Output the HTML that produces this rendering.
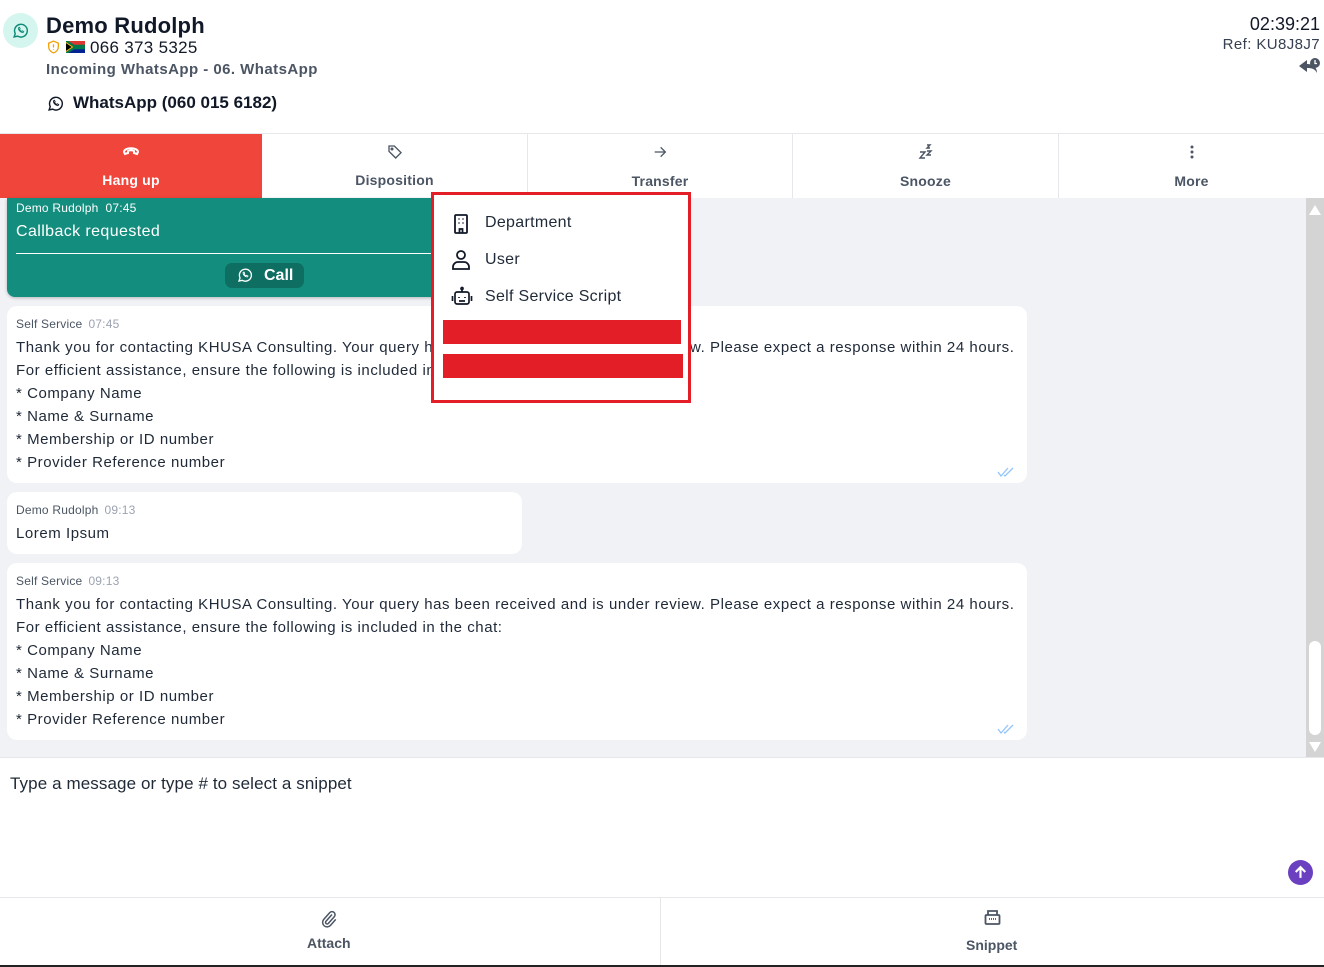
<!DOCTYPE html>
<html><head><meta charset="utf-8"><style>
*{box-sizing:border-box;margin:0;padding:0}
body{width:1324px;height:967px;position:relative;overflow:hidden;background:#fff;font-family:"Liberation Sans",sans-serif;color:#111827}
.a{position:absolute}
.tab{position:absolute;top:134px;height:64px;border-right:1px solid #e5e7eb;text-align:center;color:#4b5563;font-size:14px;font-weight:bold;letter-spacing:0.2px}
.tab svg{position:absolute;left:50%;top:10px;transform:translateX(-50%)}
.tab span{position:absolute;left:0;right:0;top:38px}
.bub{position:absolute;left:7px;background:#fff;border-radius:10px;padding:11px 9px;font-size:15px;line-height:23px;color:#1f2937;letter-spacing:0.55px}
.meta{font-size:12px;color:#4b5563;line-height:14px;margin-bottom:5px;letter-spacing:0.2px}
.meta i{font-style:normal;color:#9ca3af;margin-left:6px}
.ticks{position:absolute;right:10px;bottom:6px}
</style></head><body>
<div class="a" style="left:3px;top:13px;width:35px;height:35px;border-radius:50%;background:#d5f5ef"></div>
<svg class="a" style="left:12px;top:22px" width="17" height="17" viewBox="0 0 24 24" fill="none" stroke="#0f8a78" stroke-width="2"><path d="M3 21l1.6-4.6A9 9 0 1 1 8 20z"/><path d="M9 8.5c0 3 3 6.5 6.5 6.5l1-1.5-2-1-1 .8c-1-.5-2.3-1.8-2.8-2.8l.8-1-1-2z" stroke-width="1.3"/></svg>
<div class="a" style="left:46px;top:13px;font-size:22px;font-weight:bold;color:#111827;letter-spacing:0.2px">Demo Rudolph</div>
<svg class="a" style="left:47px;top:40px" width="13" height="14" viewBox="0 0 24 26" fill="none" stroke="#f2a20c" stroke-width="2.4"><path d="M12 2l9 4v6c0 6-4 10-9 12C7 22 3 18 3 12V6z"/><path d="M12 8v6M12 17v1"/></svg>
<svg class="a" style="left:66px;top:41px" width="19" height="12" viewBox="0 0 19 12"><rect width="19" height="12" fill="#de3831"/><rect y="6" width="19" height="6" fill="#002395"/><path d="M0 0l9 6-9 6z" fill="#000"/><path d="M0 0l8 5h11v2H8l-8 5" fill="none" stroke="#007a4d" stroke-width="2.5"/><path d="M0 1.5L6.5 6 0 10.5" fill="none" stroke="#ffb612" stroke-width="1"/></svg>
<div class="a" style="left:90px;top:38px;font-size:17px;color:#111827;letter-spacing:0.3px">066 373 5325</div>
<div class="a" style="left:46px;top:61px;font-size:15px;font-weight:bold;color:#4b5563;letter-spacing:0.45px">Incoming WhatsApp - 06. WhatsApp</div>
<svg class="a" style="left:47px;top:95px" width="17" height="17" viewBox="0 0 24 24" fill="none" stroke="#111827" stroke-width="2"><path d="M3 21l1.6-4.6A9 9 0 1 1 8 20z"/><path d="M9 8.5c0 3 3 6.5 6.5 6.5l1-1.5-2-1-1 .8c-1-.5-2.3-1.8-2.8-2.8l.8-1-1-2z" stroke-width="1.3"/></svg>
<div class="a" style="left:73px;top:93px;font-size:17px;font-weight:bold;color:#111827">WhatsApp (060 015 6182)</div>
<div class="a" style="right:4px;top:14px;font-size:18px;color:#111827">02:39:21</div>
<div class="a" style="right:4px;top:36px;font-size:15px;color:#374151;letter-spacing:0.4px">Ref: KU8J8J7</div>
<svg class="a" style="left:1298px;top:57px" width="23" height="20" viewBox="0 0 23 20"><path d="M9 3L1 9l8 6v-4c5 0 8 1 10 5 0-6-4-9-10-9z" fill="#4b5563"/><circle cx="17" cy="6" r="5" fill="#4b5563"/><path d="M17 3v3.5h2" stroke="#fff" stroke-width="1.3" fill="none"/></svg>
<div class="a" style="left:0;top:133px;width:1324px;height:1px;background:#e5e7eb"></div>
<div class="tab" style="left:0;width:262px;background:#f0453a;color:#fff;border:none">
<svg width="20" height="12" viewBox="0 0 20 12" fill="none" stroke="#fff" stroke-width="2"><path d="M3 8c0-5 14-5 14 0l-1 2-3-1v-2c-2-1-4-1-6 0v2l-3 1z"/></svg><span>Hang up</span></div>
<div class="tab" style="left:262px;width:266px"><svg width="16" height="16" viewBox="0 0 24 24" fill="none" stroke="#4b5563" stroke-width="2"><path d="M3 3h8l10 10-8 8L3 11z"/><circle cx="7.5" cy="7.5" r="1.3"/></svg><span>Disposition</span></div>
<div class="tab" style="left:528px;width:265px"><svg width="16" height="16" viewBox="0 0 24 24" fill="none" stroke="#4b5563" stroke-width="2"><path d="M4 12h16M13 5l7 7-7 7"/></svg><span style="top:39px">Transfer</span></div>
<div class="tab" style="left:793px;width:266px"><svg width="16" height="16" viewBox="0 0 16 16" fill="none" stroke="#4b5563" stroke-width="1.4"><path d="M2 8h5l-5 6h5M9 7h4l-4 4h4M9 1h3L9 4h3"/></svg><span style="top:39px">Snooze</span></div>
<div class="tab" style="left:1059px;width:265px;border:none"><svg width="6" height="16" viewBox="0 0 6 16" fill="#4b5563"><circle cx="3" cy="3" r="1.5"/><circle cx="3" cy="8" r="1.5"/><circle cx="3" cy="13" r="1.5"/></svg><span style="top:39px">More</span></div>
<div class="a" style="left:0;top:198px;width:1324px;height:559px;background:#f1f2f6"></div>
<div class="a" style="left:1306px;top:198px;width:18px;height:559px;background:#d4d4d4"></div>
<div class="a" style="left:1309px;top:641px;width:12px;height:94px;background:#fff;border-radius:6px"></div>
<svg class="a" style="left:1308px;top:204px" width="14" height="12"><path d="M7 1l6 10H1z" fill="#fff"/></svg>
<svg class="a" style="left:1308px;top:741px" width="14" height="12"><path d="M7 11l6-10H1z" fill="#fff"/></svg>
<div class="a" style="left:7px;top:198px;width:515px;height:99px;background:#138d7e;border-radius:0 0 8px 8px;box-shadow:0 1px 3px rgba(0,0,0,.25);color:#fff">
<div class="a" style="left:9px;top:3px;font-size:12px;letter-spacing:0.2px">Demo Rudolph&nbsp; 07:45</div>
<div class="a" style="left:9px;top:25px;font-size:16px;letter-spacing:0.4px">Callback requested</div>
<div class="a" style="left:9px;top:55px;width:497px;height:1px;background:#fff"></div>
<div class="a" style="left:218px;top:65px;width:79px;height:25px;border-radius:7px;background:#0e6e62"></div>
<svg class="a" style="left:230px;top:69px" width="16" height="16" viewBox="0 0 24 24" fill="none" stroke="#fff" stroke-width="2"><path d="M3 21l1.6-4.6A9 9 0 1 1 8 20z"/><path d="M9 8.5c0 3 3 6.5 6.5 6.5l1-1.5-2-1-1 .8c-1-.5-2.3-1.8-2.8-2.8l.8-1-1-2z" stroke-width="1.3"/></svg>
<div class="a" style="left:257px;top:69px;font-size:16px;font-weight:bold">Call</div>
</div>
<div class="bub" style="top:306px;width:1020px;height:177px"><div class="meta">Self Service<i>07:45</i></div>Thank you for contacting KHUSA Consulting. Your query has been received and is under review. Please expect a response within 24 hours.<br>For efficient assistance, ensure the following is included in the chat:<br>* Company Name<br>* Name &amp; Surname<br>* Membership or ID number<br>* Provider Reference number
<svg class="ticks" width="20" height="10" viewBox="0 0 20 10" fill="none" stroke="#93c5fd" stroke-width="1.3"><path d="M1 5l3 4 7-8M7 8l1 1 8-8"/></svg></div>
<div class="bub" style="top:492px;width:515px;height:62px"><div class="meta">Demo Rudolph<i>09:13</i></div>Lorem Ipsum</div>
<div class="bub" style="top:563px;width:1020px;height:177px"><div class="meta">Self Service<i>09:13</i></div>Thank you for contacting KHUSA Consulting. Your query has been received and is under review. Please expect a response within 24 hours.<br>For efficient assistance, ensure the following is included in the chat:<br>* Company Name<br>* Name &amp; Surname<br>* Membership or ID number<br>* Provider Reference number
<svg class="ticks" width="20" height="10" viewBox="0 0 20 10" fill="none" stroke="#93c5fd" stroke-width="1.3"><path d="M1 5l3 4 7-8M7 8l1 1 8-8"/></svg></div>
<div class="a" style="left:431px;top:192px;width:260px;height:211px;border:3px solid #e41e26;background:#fff">
<svg class="a" style="left:19px;top:19px" width="16" height="20" viewBox="0 0 16 20" fill="none" stroke="#111827" stroke-width="1.8"><rect x="2" y="1" width="12" height="18" rx="1"/><path d="M5.5 5h1M9.5 5h1M5.5 9h1M9.5 9h1M6.5 19v-4h3v4"/></svg>
<div class="a" style="left:51px;top:19px;font-size:16px;color:#1f2937;letter-spacing:0.3px">Department</div>
<svg class="a" style="left:18px;top:55px" width="18" height="20" viewBox="0 0 18 20" fill="none" stroke="#111827" stroke-width="1.8"><circle cx="9" cy="5" r="4"/><path d="M1 19v-2a5 5 0 0 1 5-5h6a5 5 0 0 1 5 5v2z"/></svg>
<div class="a" style="left:51px;top:56px;font-size:16px;color:#1f2937;letter-spacing:0.3px">User</div>
<svg class="a" style="left:17px;top:91px" width="22" height="20" viewBox="0 0 22 20" fill="none" stroke="#111827" stroke-width="1.7"><rect x="4" y="6" width="14" height="12" rx="2"/><path d="M11 6V3M1.5 10v5M20.5 10v5M8 11v1M14 11v1M8 15h6"/><circle cx="11" cy="2.5" r="1"/></svg>
<div class="a" style="left:51px;top:93px;font-size:16px;color:#1f2937;letter-spacing:0.3px">Self Service Script</div>
<div class="a" style="left:9px;top:125px;width:238px;height:24px;background:#e41e26"></div>
<div class="a" style="left:9px;top:159px;width:240px;height:24px;background:#e41e26"></div>
</div>
<div class="a" style="left:0;top:757px;width:1324px;height:1px;background:#e5e7eb"></div>
<div class="a" style="left:10px;top:774px;font-size:17px;color:#1f2937;letter-spacing:0.1px">Type a message or type # to select a snippet</div>
<div class="a" style="left:1288px;top:860px;width:25px;height:25px;border-radius:50%;background:#6a3fc0"></div>
<svg class="a" style="left:1292px;top:864px" width="17" height="17" viewBox="0 0 16 16" fill="none" stroke="#fff" stroke-width="2"><path d="M8 13V3M3.5 7.5L8 3l4.5 4.5"/></svg>
<div class="a" style="left:0;top:897px;width:1324px;height:1px;background:#e5e7eb"></div>
<div class="a" style="left:660px;top:898px;width:1px;height:67px;background:#e5e7eb"></div>
<svg class="a" style="left:320px;top:909px" width="18" height="20" viewBox="0 0 24 24" fill="none" stroke="#4b5563" stroke-width="2"><path d="M16 6l-8 9a2 2 0 0 0 3 3l8-9a4 4 0 0 0-6-5.5l-8 9a6 6 0 0 0 9 8l7-8"/></svg>
<div class="a" style="left:307px;top:935px;font-size:14px;font-weight:bold;color:#4b5563">Attach</div>
<svg class="a" style="left:984px;top:908px" width="17" height="18" viewBox="0 0 17 18" fill="none" stroke="#4b5563" stroke-width="1.8"><path d="M4 7V3h9v4"/><rect x="1.5" y="7" width="14" height="9" rx="1"/><path d="M5 11h7" stroke-dasharray="1 1"/></svg>
<div class="a" style="left:966px;top:937px;font-size:14px;font-weight:bold;color:#4b5563">Snippet</div>
<div class="a" style="left:0;top:965px;width:1324px;height:2px;background:#222"></div>
</body></html>
